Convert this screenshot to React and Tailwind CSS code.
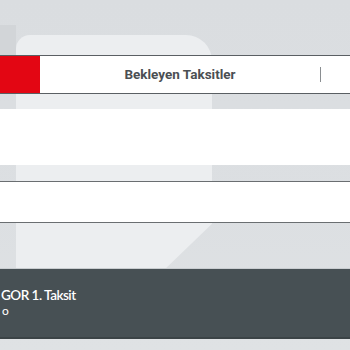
import React from "react";

export default function App() {
  return (
    <div className="relative w-[350px] h-[350px] overflow-hidden bg-[linear-gradient(180deg,#dadde0_0%,#dcdfe2_60%,#dfe2e4_100%)] font-['Lato','Open_Sans',sans-serif]">
      {/* soft background shapes */}
      <div className="absolute left-[16px] top-[35px] w-[196px] h-[236px] rounded-tl-[14px] rounded-tr-[26px] bg-[#eceef0] [clip-path:polygon(0_0,100%_0,100%_80%,75%_100%,0_100%)]" />
      <div className="absolute left-0 top-[25px] w-[16px] h-[60px] bg-[#d2d5d8]" />

      <div className="relative flex flex-col">
        <div className="h-[55px]" />

        {/* tab row */}
        <div className="flex h-[39px] items-stretch border-y border-[#5a5f63] bg-white">
          <div className="w-[40px] bg-[#e30613]" />
          <div className="flex flex-1 items-center justify-center">
            <span className="font-['Roboto',sans-serif] text-[13.5px] font-bold text-[#4b4f53]">Bekleyen Taksitler</span>
          </div>
          <div className="flex items-center pr-[29px]">
            <div className="w-px h-[15px] bg-[#8a8e91]" />
          </div>
        </div>

        <div className="h-[15px]" />
        <div className="h-[56px] bg-white" />
        <div className="h-[16px]" />

        {/* empty row */}
        <div className="h-[42px] border-y border-[#6a6e71] bg-white" />

        <div className="h-[45px]" />

        {/* dark panel */}
        <div className="h-[71px] border-t border-[#c9cdd0] border-b-2 border-b-[#3b4346] bg-[#475054] flex flex-col pt-[18px] pl-[1px]">
          <span className="text-[13.5px] font-semibold leading-[16px] tracking-[-0.5px] text-white">GOR 1. Taksit</span>
          <span className="text-[12px] leading-[15px] text-white pl-[1px]">o</span>
        </div>
      </div>
    </div>
  );
}
